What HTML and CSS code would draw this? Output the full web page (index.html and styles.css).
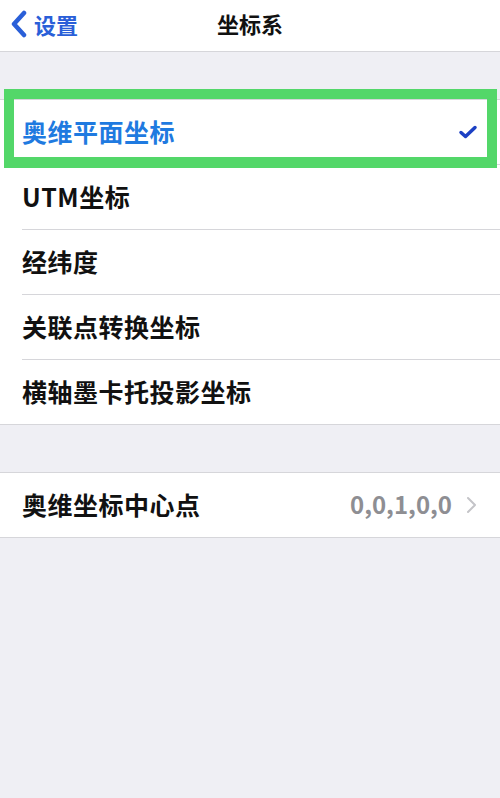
FILE: index.html
```html
<!DOCTYPE html>
<html lang="zh">
<head>
<meta charset="utf-8">
<link rel="stylesheet" href="styles.css">
</head>
<body>
<div class="nav">
  <div class="back">
    <svg class="back-icon" width="20" height="28" viewBox="0 0 20 28"><path d="M15 3 L5 14 L15 25" fill="none" stroke="#2a5fd8" stroke-width="4.5" stroke-linecap="round" stroke-linejoin="round"/></svg>
    <span>设置</span>
  </div>
  <div class="title">坐标系</div>
</div>
<div class="group first">
  <div class="row selected">
    <span class="label">奥维平面坐标</span>
    <svg class="check" width="20" height="16" viewBox="0 0 20 16"><path d="M3 8.5 L7.5 12.5 L17 3.5" fill="none" stroke="#1c40c4" stroke-width="3.5" stroke-linecap="round" stroke-linejoin="round"/></svg>
  </div>
  <div class="row"><span class="label">UTM坐标</span></div>
  <div class="row"><span class="label">经纬度</span></div>
  <div class="row"><span class="label">关联点转换坐标</span></div>
  <div class="row"><span class="label">横轴墨卡托投影坐标</span></div>
</div>
<div class="group second">
  <div class="row">
    <span class="label">奥维坐标中心点</span>
    <span class="value">0,0,1,0,0</span>
    <svg class="chev" width="12" height="18" viewBox="0 0 12 18"><path d="M2 2 L9 9 L2 16" fill="none" stroke="#c4c4c8" stroke-width="2" stroke-linecap="round" stroke-linejoin="round"/></svg>
  </div>
</div>
</body>
</html>
```
FILE: styles.css
```css
html, body {
  margin: 0;
  padding: 0;
}
body {
  width: 500px;
  height: 798px;
  background: #efeff4;
  font-family: "Noto Sans CJK SC", "Noto Sans", sans-serif;
  overflow: hidden;
}
.nav {
  height: 52px;
  background: #ffffff;
  border-bottom: 1px solid #d6d6da;
  position: relative;
  display: flex;
  align-items: center;
  justify-content: center;
  box-sizing: border-box;
}
.back {
  position: absolute;
  left: 9px;
  top: 0;
  height: 52px;
  display: flex;
  align-items: center;
  gap: 5px;
  color: #2a5fd8;
  font-size: 22px;
  font-weight: 600;
}
.back-icon {
  margin-top: -4px;
}
.back span {
  margin-top: -5px;
}
.title {
  font-size: 22px;
  font-weight: 600;
  color: #111111;
  margin-top: -5px;
}
.group {
  background: #ffffff;
  border-top: 1px solid #d6d6da;
  border-bottom: 1px solid #d6d6da;
}
.group.first {
  margin-top: 47px;
}
.group.second {
  margin-top: 47px;
}
.row {
  height: 65px;
  margin-left: 22px;
  padding-right: 22px;
  display: flex;
  align-items: center;
  border-bottom: 1px solid #d6d6da;
  box-sizing: border-box;
  position: relative;
}
.row:last-child {
  border-bottom: none;
  height: 64px;
}
.label {
  flex: 1;
  font-size: 25px;
  font-weight: 600;
  color: #111111;
  letter-spacing: 0.5px;
  margin-top: -3px;
}
.selected .label {
  color: #1f7ae0;
}
.selected::after {
  content: "";
  position: absolute;
  top: -11px;
  bottom: -4px;
  left: -18px;
  right: 3px;
  border: 10px solid #53d769;
  border-bottom-width: 11px;
  pointer-events: none;
}
.check {
  margin-right: 0;
}
.value {
  font-size: 24px;
  font-weight: 600;
  color: #8e8e93;
  letter-spacing: 0;
  margin-right: 14px;
  margin-top: -3px;
}
.chev {
  margin-right: 0;
}
```
